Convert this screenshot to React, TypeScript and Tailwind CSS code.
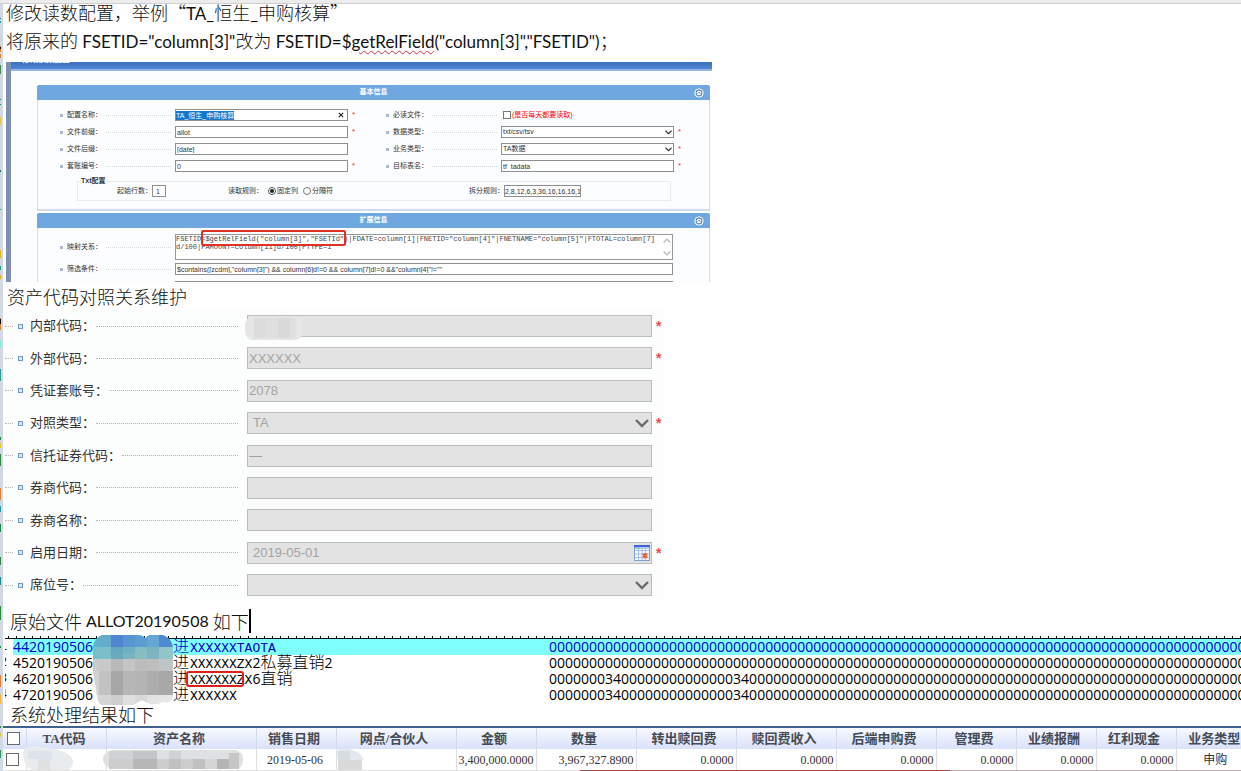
import React from "react";

const CJK = "font-['Noto_Sans_CJK_SC',sans-serif]";

function Chevron({ className }: { className: string }) {
  return (
    <svg viewBox="0 0 14 9" className={className} fill="none" aria-hidden="true">
      <path d="M1 1l6 6 6-6" stroke="currentColor" strokeWidth="2.4" />
    </svg>
  );
}

function CollapseIcon() {
  return (
    <svg viewBox="0 0 10 10" className="h-[10px] w-[10px]" aria-hidden="true">
      <circle cx="5" cy="5" r="4.6" fill="#fff" />
      <circle cx="5" cy="5" r="2.9" fill="none" stroke="#5b86bd" strokeWidth="1.1" />
      <path d="M3.6 5.6L5 4.2l1.4 1.4" fill="none" stroke="#41699f" strokeWidth="0.9" />
    </svg>
  );
}

function CalendarIcon() {
  return (
    <svg viewBox="0 0 16 16" className="h-4 w-4" aria-hidden="true">
      <rect x="0.5" y="0.5" width="15" height="15" fill="#f4f8ff" stroke="#7f9fd0" />
      <rect x="0" y="0" width="16" height="2" fill="#3f62d8" />
      <rect x="1" y="2" width="5" height="2" fill="#8fc0f0" />
      <rect x="6" y="2" width="9" height="2" fill="#b9cdf5" />
      <path d="M1 5.5h14M1 9h14M1 12.5h14M4.5 3v12M8 3v12M11.5 3v12" stroke="#93b5e2" strokeWidth="0.8" />
      <rect x="8.5" y="8" width="5" height="5.5" fill="#e8875f" />
      <path d="M9.5 9.5h3M9.5 11.5h3" stroke="#c7411d" strokeWidth="0.9" />
    </svg>
  );
}

/* ---------- configuration panel ---------- */

function SmallLabel({ id, text, className }: { id: string; text: string; className: string }) {
  return (
    <div className={`flex items-center gap-1 ${className}`}>
      <span className="h-[3px] w-[3px] shrink-0 bg-[#a9b8cc]" />
      <label htmlFor={id} className="shrink-0 whitespace-nowrap">
        {text}：
      </label>
      <span className="mr-1 h-px flex-1 border-t border-dotted border-[#d3d8dc]" />
    </div>
  );
}

const smallInput = "h-3 w-full border border-[#8f8f8f] bg-white px-px text-[7px] leading-[10px] text-[#333] outline-none";

function Star({ show = true }: { show?: boolean }) {
  return <span className="block w-[13px] pl-1 text-[8px] leading-3 text-[#e33]">{show ? "*" : ""}</span>;
}

function SmallSelect({ id, value }: { id: string; value: string }) {
  return (
    <div className="relative flex-1">
      <select id={id} className={`${smallInput} block appearance-none`}>
        <option>{value}</option>
      </select>
      <Chevron className="pointer-events-none absolute top-1 right-[2px] h-[5px] w-[7px] text-[#333]" />
    </div>
  );
}

function SectionHeader({ title }: { title: string }) {
  return (
    <div className="flex h-[15px] items-center rounded-t-[2px] bg-[#6fa8e0] pr-[6px] pl-4">
      <h2 className="flex-1 text-center text-[7px] font-bold text-white">{title}</h2>
      <button aria-label={title} className="block">
        <CollapseIcon />
      </button>
    </div>
  );
}

function ConfigPanel() {
  const rows = [
    { l: "配置名称", star: true, r: "必读文件" },
    { l: "文件前缀", v: "allot", star: true, r: "数据类型", rv: "txt/csv/tsv" },
    { l: "文件后缀", v: "[date]", star: false, r: "业务类型", rv: "TA数据" },
    { l: "套账编号", v: "0", star: true, r: "目标表名", rv: "tf_tadata" },
  ];
  return (
    <section className="ml-[3px] flex h-[220px] w-[706px] overflow-hidden bg-[#fbfdfe] font-['Liberation_Sans','Noto_Sans_CJK_SC',sans-serif] text-[7px] text-[#333]">
      <div className="w-[5px] shrink-0 bg-[#8090b4]" />
      <div className="min-w-0 flex-1">
        <div className="flex h-[9px] items-start border-b-2 border-[#93b3e3] bg-linear-to-b from-[#3a70bd] to-[#4f86d3] pl-[11px]">
          <div className="flex h-[3px] items-end overflow-hidden text-[8px] leading-[10px] font-bold text-white">修改读数配置</div>
        </div>
        <div className="mt-[14px] mr-[2px] ml-[26px]">
          <SectionHeader title="基本信息" />
          <div className="h-[111px] border border-t-0 border-b-2 border-[#d3dbeb] pt-[9px]">
            <div className="flex flex-col gap-[5px]">
              {rows.map((row, i) => (
                <div key={row.l} className="flex h-3 items-center">
                  <SmallLabel id={`l${i}`} text={row.l} className="ml-[22px] w-[115px]" />
                  <div className="relative w-[173px]">
                    {i === 0 ? (
                      <div className="flex h-3 items-center border border-[#8f8f8f] bg-white pr-[3px]">
                        <span id="l0" className="bg-[#1277cf] leading-[9px] text-white">
                          TA_恒生_申购核算
                        </span>
                        <button aria-label="清除" className="ml-auto">
                          <svg viewBox="0 0 6 6" className="h-[6px] w-[6px]">
                            <path d="M.8.8l4.4 4.4M5.2.8L.8 5.2" stroke="#222" strokeWidth="1.1" />
                          </svg>
                        </button>
                      </div>
                    ) : (
                      <input id={`l${i}`} defaultValue={row.v} className={`${smallInput} block`} />
                    )}
                  </div>
                  <Star show={row.star} />
                  <SmallLabel id={`r${i}`} text={row.r} className="ml-[25px] w-[115px]" />
                  {i === 0 ? (
                    <div className="flex flex-1 items-center gap-px pl-[2px] text-[#f00]">
                      <input id="r0" type="checkbox" className="h-2 w-2 appearance-none border border-[#777] bg-white" />
                      <span>(是否每天都要读取)</span>
                    </div>
                  ) : i === 3 ? (
                    <input id="r3" defaultValue={row.rv} className={`${smallInput} min-w-0 flex-1`} />
                  ) : (
                    <SmallSelect id={`r${i}`} value={row.rv ?? ""} />
                  )}
                  <div className="w-[35px]">
                    <Star show={i > 0} />
                  </div>
                </div>
              ))}
            </div>
            <fieldset className="mt-[5px] mr-[38px] ml-[39px] h-[24px] border border-[#e6ebee]">
              <legend className="ml-[3px] leading-[8px] font-bold">Txt配置</legend>
              <div className="flex items-center">
                <label htmlFor="start" className="ml-[39px]">起始行数：</label>
                <input id="start" defaultValue="1" className="h-3 w-[14px] border border-[#8f8f8f] bg-white px-[3px] text-[7px]" />
                <span className="ml-[62px] w-10">读取规则：</span>
                <label className="flex items-center gap-px">
                  <input type="radio" name="rule" defaultChecked className="h-2 w-2 appearance-none rounded-full border border-[#555] bg-[#222] bg-clip-content p-px" />
                  固定列
                </label>
                <label className="ml-[5px] flex items-center gap-px">
                  <input type="radio" name="rule" className="h-2 w-2 appearance-none rounded-full border border-[#777] bg-white" />
                  分隔符
                </label>
                <label htmlFor="split" className="ml-auto">拆分规则：</label>
                <input id="split" defaultValue="2,8,12,6,3,36,16,16,16,1" className="mr-[89px] h-3 w-[77px] border border-[#8f8f8f] bg-white text-[7px]" />
              </div>
            </fieldset>
          </div>
          <div className="mt-[2px]">
            <SectionHeader title="扩展信息" />
            <div className="flex flex-col gap-[3px] border-x border-[#d3dbeb] pt-[6px] pr-[36px]">
              <div className="flex items-center">
                <SmallLabel id="map" text="映射关系" className="ml-[22px] w-[115px]" />
                <div className="relative flex-1">
                  <textarea
                    id="map"
                    className="block h-[26px] w-full resize-none overflow-hidden border border-[#999] bg-white font-['Liberation_Mono',monospace] text-[7px] leading-[8px] whitespace-pre text-[#444] outline-none"
                    defaultValue={
                      'FSETID=$getRelField("column[3]","FSETId")|FDATE=column[1]|FNETID="column[4]"|FNETNAME="column[5]"|FTOTAL=column[7]\nd/100|FAMOUNT=column[11]d/100|FTYPE=1'
                    }
                  />
                  <div className="pointer-events-none absolute -top-1 left-[26px] h-4 w-[145px] rounded-[2px] border-2 border-[#e03127]" />
                  <Chevron className="absolute top-[4px] right-[2px] h-[5px] w-[8px] rotate-180 text-[#b8b8b8]" />
                  <Chevron className="absolute right-[2px] bottom-[4px] h-[5px] w-[8px] text-[#b8b8b8]" />
                </div>
              </div>
              <div className="flex items-center">
                <SmallLabel id="filter" text="筛选条件" className="ml-[22px] w-[115px]" />
                <input
                  id="filter"
                  defaultValue={'$contains([zcdm],"column[3]") && column[6]d!=0 && column[7]d!=0 &&"column[4]"!=""'}
                  className={`${smallInput} min-w-0 flex-1`}
                />
              </div>
              <input aria-label="其他条件" className="mt-[3px] ml-[137px] h-3 border border-[#8f8f8f] bg-white" />
            </div>
          </div>
        </div>
      </div>
    </section>
  );
}

/* ---------- asset code form ---------- */

type Field = { label: string; value?: string; star?: boolean; kind?: "select" | "date" | "masked" };

const fields: Field[] = [
  { label: "内部代码", star: true, kind: "masked" },
  { label: "外部代码", value: "XXXXXX", star: true },
  { label: "凭证套账号", value: "2078" },
  { label: "对照类型", value: "TA", star: true, kind: "select" },
  { label: "信托证券代码", value: "—" },
  { label: "券商代码" },
  { label: "券商名称" },
  { label: "启用日期", value: "2019-05-01", star: true, kind: "date" },
  { label: "席位号", kind: "select" },
];

function AssetForm() {
  const box = "block h-[22px] w-full appearance-none border border-[#bdbdbd] bg-[#e3e3e3] text-[13px] text-[#a3a3a3] opacity-100 outline-none";
  return (
    <form className="ml-[2px] flex h-[291px] w-[660px] flex-col justify-between bg-[#fcfefe] py-[5px] font-['Liberation_Sans','Noto_Sans_CJK_SC',sans-serif] text-[13px] text-[#333]">
      {fields.map((f, i) => (
        <div key={f.label} className="flex h-[22px] items-center">
          <span className="w-2 border-t border-dotted border-[#b5b5b5]" />
          <span className="ml-[5px] h-[5px] w-[5px] border border-[#6f9cc9] bg-[#d9e6f3]" />
          <label htmlFor={`f${i}`} className="ml-[7px]">
            {f.label}：
          </label>
          <span className="mr-[9px] ml-px flex-1 border-t border-dotted border-[#b5b5b5]" />
          <div className="relative w-[405px]">
            {f.kind === "select" ? (
              <>
                <select id={`f${i}`} disabled className={`${box} pl-[5px]`}>
                  <option>{f.value ?? ""}</option>
                </select>
                <Chevron className="absolute top-[7px] right-[3px] h-[9px] w-[14px] text-[#6a6a6a]" />
              </>
            ) : (
              <input id={`f${i}`} disabled defaultValue={f.value ?? ""} className={`${box} ${f.kind === "date" ? "pl-[5px]" : "pl-px"}`} />
            )}
            {f.kind === "date" && (
              <button type="button" aria-label="日历" className="absolute top-[3px] right-[2px]">
                <CalendarIcon />
              </button>
            )}
            {f.kind === "masked" && (
              <svg viewBox="0 0 58 23" className="absolute top-[2px] -left-[2px] h-[23px] w-[58px]" aria-hidden="true">
                <rect width="58" height="23" rx="8" fill="#e6e6e6" />
                <path d="M9 1h12v20H9z" fill="#dcdcdc" />
                <path d="M21 1h12v20H21z" fill="#dfdfdf" />
                <path d="M33 1h12v20H33z" fill="#d9d9d9" />
                <path d="M45 1h6v20h-6z" fill="#e0e0e0" />
              </svg>
            )}
          </div>
          <span className="w-[13px] pl-1 text-[14px] leading-4 font-bold text-[#ee4a50]">{f.star ? "*" : ""}</span>
        </div>
      ))}
    </form>
  );
}

/* ---------- raw file listing ---------- */

function Mixed({ text }: { text: string }) {
  const parts = text.match(/[0-9]+|[A-Z]+|[^0-9A-Z]+/g) ?? [];
  return (
    <>
      {parts.map((p, i) => (
        <span
          key={i}
          className={
            /[0-9]/.test(p)
              ? "font-['Open_Sans',sans-serif] text-[14px]"
              : /[A-Z]/.test(p)
                ? "font-['Liberation_Mono',monospace] text-[13px]"
                : "font-['Noto_Sans_CJK_SC',sans-serif] text-[16px] font-light"
          }
        >
          {p}
        </span>
      ))}
    </>
  );
}

const zeros = "0".repeat(100);
const lines = [
  { id: "4420190506", name: "XXXXXXTAOTA", amount: zeros },
  { id: "4520190506", name: "XXXXXXZX2私募直销2", amount: zeros },
  { id: "4620190506", name: "XXXXXXZX6直销", amount: "0000000340000000000000034" + zeros },
  { id: "4720190506", name: "XXXXXX", amount: "0000000340000000000000034" + zeros },
];

const mosaic = [
  ["#61b0cc", "#64aacd", "#4f86cf", "#5895d2", "#5b9dce", "#65a6d2", "#4e8ad0"],
  ["#78bfc9", "#7bbfc9", "#64a9bd", "#6fb0c0", "#86bdc4", "#7ab2c0", "#90c6ca"],
  ["#78bfc9", "#7bbfc9", "#6aaabc", "#79b4c0", "#8abdc2", "#80b4c0", "#90c6ca"],
  ["#c8cccd", "#c9c9c9", "#b9b9b9", "#c5c5c5", "#bcbcbc", "#bebebe", "#bfc5c5"],
  ["#d2d2d2", "#c2c2c2", "#a6a6a6", "#b6b6b6", "#b4b4b4", "#adadad", "#a8a8a8"],
  ["#dddddd", "#d5d5d5", "#cfcfcf", "#e0e0e0", "#d8d8d8", "#e3e3e3", "#e6e6e6"],
];
const mosaicTops = [0, 12, 18, 24, 36, 60];
const mosaicHeights = [12, 6, 6, 12, 24, 12];

function RawFile() {
  return (
    <div className="relative ml-[2px]">
      <svg className="block h-1 w-full" aria-hidden="true">
        <defs>
          <pattern id="ticks" width="8" height="4" patternUnits="userSpaceOnUse">
            <path d="M0 3h8v1H0zM3 1h1v2H3z" fill="#111" />
          </pattern>
        </defs>
        <rect width="100%" height="4" fill="url(#ticks)" />
      </svg>
      {lines.map((l, i) => (
        <div key={l.id} className="flex h-4 leading-3 whitespace-nowrap">
          <span className="mr-[6px] flex w-[2px] justify-end overflow-hidden font-['Liberation_Mono',monospace] text-[13px] leading-4">{i + 1}</span>
          <div className={i === 0 ? "flex min-w-0 flex-1 items-baseline bg-[#80ffff] text-[#0000c8]" : "flex min-w-0 flex-1 items-baseline text-black"}>
            <span className="w-40 shrink-0">
              <Mixed text={l.id} />
            </span>
            <span className="w-[17px] shrink-0">
              <Mixed text="进" />
            </span>
            <span className="w-[359px] shrink-0">
              <Mixed text={l.name} />
            </span>
            <span className="min-w-0 flex-1 overflow-x-clip">
              <Mixed text={l.amount} />
            </span>
          </div>
        </div>
      ))}
      <div className="absolute top-[36px] left-[181px] h-4 w-[58px] rounded-[3px] border-2 border-[#e0201b]" />
      <svg viewBox="0 0 80 70" className="absolute top-0 left-[88px] h-[70px] w-20" aria-hidden="true">
        <clipPath id="blob">
          <path d="M9 0h36q5 0 7 3 4-4 10-4 18 0 18 16v46q0 8-10 6-8 4-16 1-5-5-10 0-10 6-18 3-20 4-22-8l-1-10Q-4 22 1 8 3 2 9 0z" />
        </clipPath>
        <g clipPath="url(#blob)">
          {mosaic.map((row, r) =>
            [...row, row[6]].map((c, k) => (
              <rect key={`${r}-${k}`} x={k * 12 - 6} y={mosaicTops[r]} width="12.2" height={mosaicHeights[r]} fill={c} />
            )),
          )}
        </g>
      </svg>
    </div>
  );
}

/* ---------- result table ---------- */

const cols = [
  { t: "TA代码", w: "w-20", v: "" },
  { t: "资产名称", w: "w-[150px]", v: "" },
  { t: "销售日期", w: "w-20", v: "2019-05-06", a: "text-center" },
  { t: "网点/合伙人", w: "w-[120px]", v: "" },
  { t: "金额", w: "w-20", v: "3,400,000.0000" },
  { t: "数量", w: "w-[100px]", v: "3,967,327.8900" },
  { t: "转出赎回费", w: "w-[100px]", v: "0.0000" },
  { t: "赎回费收入", w: "w-[100px]", v: "0.0000" },
  { t: "后端申购费", w: "w-[100px]", v: "0.0000" },
  { t: "管理费", w: "w-20", v: "0.0000" },
  { t: "业绩报酬", w: "w-20", v: "0.0000" },
  { t: "红利现金", w: "w-20", v: "0.0000" },
  { t: "业务类型", w: "w-20", v: "申购", a: "text-center" },
];

const tick = "block h-[13px] w-[13px] appearance-none border border-[#6b6b6b] bg-white";

function ResultTable() {
  return (
    <div className="relative overflow-hidden border-t-2 border-[#3f618f]">
      <table className="w-[1253px] table-fixed border-collapse font-['Liberation_Serif','Noto_Sans_CJK_SC',serif] text-[12px] text-[#333]">
        <thead>
          <tr className="h-[21px] bg-linear-to-b from-[#f7f9fe] to-[#d9e1fb] text-[13px] leading-5 text-[#444b55]">
            <th className="w-[23px] p-0 pl-1">
              <input type="checkbox" aria-label="全选" className={tick} />
            </th>
            {cols.map((c) => (
              <th key={c.t} className={`${c.w} border-l border-[#d4dbe8] p-0 pr-1 whitespace-nowrap`}>
                {c.t}
              </th>
            ))}
          </tr>
        </thead>
        <tbody>
          <tr className="h-[21px] leading-5">
            <td className="p-0 pl-[3px]">
              <input type="checkbox" aria-label="选择行" className={tick} />
            </td>
            {cols.map((c) => (
              <td key={c.t} className={`border-l border-[#dedede] p-0 pr-[2px] whitespace-nowrap ${c.a ?? "text-right"}`}>
                {c.v}
              </td>
            ))}
          </tr>
        </tbody>
      </table>
      <svg viewBox="0 0 360 26" className="pointer-events-none absolute top-[17px] left-[17px] h-[26px] w-[360px]" aria-hidden="true">
        <path d="M4 4Q12-1 28 3 52 6 53 17q-1 9-10 9H14Q0 20 4 4z" fill="#e9ecee" />
        <path d="M8 6h24v8H8z" fill="#dde3ea" />
        <path d="M18 14h12v12H18z" fill="#e0e1e1" />
        <path d="M93 5h122q9 2 8 10 0 9-8 9H93q-10-2-10-10 0-7 10-9z" fill="#dfe0e1" />
        <path d="M89 6h24v8H89zM149 6h12v8h-12z" fill="#d0d3d6" />
        <path d="M113 6h24v8h-24z" fill="#c3c5c8" />
        <path d="M89 14h24v10H89zM137 14h12v10h-12zM161 14h12v10h-12z" fill="#cdcdcd" />
        <path d="M113 14h24v10h-24z" fill="#b7b7b7" />
        <path d="M149 14h12v10h-12zM173 14h12v10h-12z" fill="#c0c0c0" />
        <path d="M185 14h12v10h-12z" fill="#d5d5d5" />
        <path d="M197 14h12v10h-12z" fill="#b5b5b5" />
        <path d="M209 8h10v16h-10z" fill="#c6c6c6" />
        <path d="M316 5q14-4 24 4l4 6h-26z" fill="#e3e9ef" />
        <path d="M318 15h24v11h-24z" fill="#dadada" />
        <path d="M318 6h12v9h-12z" fill="#d6dce1" />
      </svg>
    </div>
  );
}

function EdgeMarks() {
  const marks: [number, number, string][] = [
    [18, 1, "#0a8f8f"], [21, 2, "#2aa0a0"], [46, 6, "#e08030"], [47, 2, "#111"], [54, 4, "#e08030"], [65, 9, "#4a8a5a"],
    [99, 1, "#0a8a3a"], [104, 1, "#0a8a3a"], [117, 8, "#f0c040"], [170, 2, "#1a7a4a"], [209, 1, "#1a9a9a"], [250, 8, "#e8b020"],
    [266, 4, "#2a9a8a"], [275, 4, "#e8b020"], [318, 12, "#e08030"], [319, 5, "#111"], [340, 8, "#7fe8e8"], [369, 12, "#2a9a9a"],
    [437, 3, "#1a8a3a"], [443, 5, "#e8c030"], [454, 12, "#2a8a3a"], [488, 12, "#e08030"], [506, 6, "#2a9aaa"], [524, 8, "#1a8a4a"],
    [557, 8, "#2a8a3a"], [577, 8, "#1a8a8a"], [606, 14, "#2a8a3a"], [646, 2, "#1a8a4a"], [675, 12, "#e08030"], [694, 10, "#f0b040"],
    [726, 2, "#1a8a3a"], [733, 4, "#e8c030"], [750, 8, "#2a9a5a"],
  ];
  return (
    <svg className="h-[767px] w-px shrink-0" aria-hidden="true">
      {marks.map(([y, h, c]) => (
        <rect key={`${y}-${h}`} x="0" y={y - 4} width="1" height={h} fill={c} />
      ))}
    </svg>
  );
}

export default function App() {
  const prose = "font-['Lato','Noto_Sans_CJK_SC',sans-serif] text-[17px] text-[#111] whitespace-nowrap";
  const zh = `${CJK} text-[18px] font-light`;
  return (
    <div className="min-h-screen overflow-hidden bg-white">
      <div className="h-1 border-b border-[#cfcfcf] bg-[#ececec]" />
      <div className="flex">
        <div className="flex w-[3px] shrink-0 bg-[#d2d9e6]">
          <EdgeMarks />
        </div>
        <main className="min-w-0 flex-1">
          <div className={`${prose} flex flex-col gap-[10px] pl-[3px]`}>
            <p className="h-[18px] leading-[16px]">
              <span className={zh}>修改读数配置，举例“</span>TA_<span className={zh}>恒生</span>_<span className={zh}>申购核算”</span>
            </p>
            <p className="h-[18px] leading-[16px]">
              <span className={zh}>将原来的</span> FSETID="column[3]"<span className={zh}>改为</span> FSETID=$
              <span className="underline decoration-[#c8324a] decoration-wavy decoration-1 underline-offset-2">getRelField</span>
              ("column[3]","FSETID")<span className={zh}>；</span>
            </p>
          </div>
          <div className="mt-3">
            <ConfigPanel />
          </div>
          <p className={`${prose} h-7 pl-1 leading-7`}>
            <span className={zh}>资产代码对照关系维护</span>
          </p>
          <AssetForm />
          <p className={`${prose} mt-[6px] flex h-7 items-center pl-[7px] leading-7`}>
            <span className={zh}>原始文件</span>
            <span className="mx-1 text-[16px]">ALLOT20190508</span>
            <span className={zh}>如下</span>
            <span className="h-6 w-[2px] bg-black" />
          </p>
          <RawFile />
          <p className={`${prose} h-[23px] pl-[7px] leading-[23px]`}>
            <span className={zh}>系统处理结果如下</span>
          </p>
          <ResultTable />
          <div className="flex h-px">
            <div className="w-[577px] bg-[#e2e2e2]" />
            <div className="w-[370px] bg-[#a8483c]" />
            <div className="flex-1 bg-[#c9a9a4]" />
          </div>
        </main>
      </div>
    </div>
  );
}
